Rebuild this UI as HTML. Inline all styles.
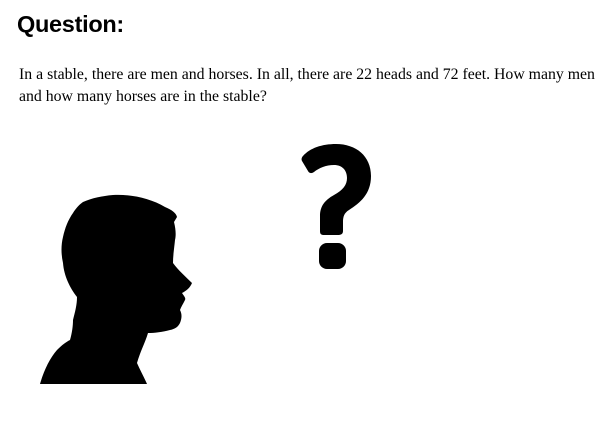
<!DOCTYPE html>
<html><head><meta charset="utf-8"><style>
html,body{margin:0;padding:0;background:#fff;width:604px;height:424px;overflow:hidden;position:relative}
.t{position:absolute;left:17px;top:11px;font:bold 23.5px "Liberation Sans",sans-serif;color:#000;letter-spacing:-0.3px}
.b{position:absolute;left:19px;top:64px;width:590px;font:15.8px/21.5px "Liberation Serif",serif;color:#000;white-space:nowrap}
svg{position:absolute;left:0;top:0}
</style></head><body>
<div class="t">Question:</div>
<div class="b">In a stable, there are men and horses. In all, there are 22 heads and 72 feet. How many men<br>and how many horses are in the stable?</div>
<svg width="604" height="424" viewBox="0 0 604 424">
<path fill="#000" d="M113 195 C130 194 150 198 165 207 C172 210 176 213 177 217 L174 222 C176 230 176 236 175 240 C174 250 173 256 173 263 C178 270 186 277 192 283 C190 288 186 291 182 293 C184 296 186 298 185 300 C183 304 181 307 180 310 C182 314 182 318 180 323 C178 327 175 329 170 330 C162 332 155 333 148 333 C145 343 140 352 137 363 C140 370 144 377 147 384 L40 384 C44 370 50 358 57 350 C62 345 66 342 70 340 C72 333 73 326 73 320 C75 312 77 305 77 297 C70 288 64 276 63 263 C61 254 61 245 63 237 C65 228 68 220 73 213 C76 208 80 204 83 202 C92 198 102 196 113 195 Z"/>
<path fill="#000" d="M303 156 C310 148 322 144 336 144 C356 144 371 156 371 176 C371 194 360 203 349 210 C344 213 343 217 343 222 L343 231 C343 234 341 235 338 235 L324 235 C321 235 320 234 320 231 L320 216 C320 206 325 200 334 195 C343 190 347 185 347 178 C347 170 342 165 334 165 C326 165 319 168 314 172 C311 174 309 173 308 171 L302 161 C301 159 302 157 303 156 Z"/>
<rect x="319" y="243" width="27" height="26" rx="8" fill="#000"/>
</svg>
</body></html>
